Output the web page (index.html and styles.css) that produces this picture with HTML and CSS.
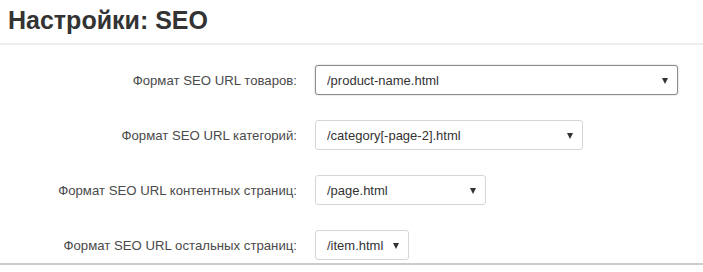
FILE: index.html
```html
<!DOCTYPE html>
<html lang="ru">
<head>
    <meta charset="UTF-8">
    <meta name="viewport" content="width=device-width, initial-scale=1.0">
    <title>Настройки: SEO</title>
    <link rel="stylesheet" href="styles.css">
</head>
<body>
    <div class="page-header">
        <h1>Настройки: SEO</h1>
    </div>
    <form class="settings">
        <div class="form-row">
            <label for="seo-products">Формат SEO URL товаров:</label>
            <span class="select-wrap is-active w-products">
                <select id="seo-products">
                    <option>/product-name.html</option>
                </select>
            </span>
        </div>
        <div class="form-row">
            <label for="seo-categories">Формат SEO URL категорий:</label>
            <span class="select-wrap w-categories">
                <select id="seo-categories">
                    <option>/category[-page-2].html</option>
                </select>
            </span>
        </div>
        <div class="form-row">
            <label for="seo-pages">Формат SEO URL контентных страниц:</label>
            <span class="select-wrap w-pages">
                <select id="seo-pages">
                    <option>/page.html</option>
                </select>
            </span>
        </div>
        <div class="form-row">
            <label for="seo-other">Формат SEO URL остальных страниц:</label>
            <span class="select-wrap w-other">
                <select id="seo-other">
                    <option>/item.html</option>
                </select>
            </span>
        </div>
    </form>
</body>
</html>
```

FILE: styles.css
```css
body {
    margin: 0;
    font-family: "Liberation Sans", Arial, sans-serif;
    background-color: #fff;
    color: #333;
}
.page-header {
    padding: 6px 8px 0;
    height: 37px;
    border-bottom: 2px solid #eee;
}
.page-header h1 {
    margin: 0;
    font-size: 25px;
    line-height: 29px;
    font-weight: bold;
    color: #333;
}
.settings {
    padding-top: 20px;
    border-bottom: 2px solid #ccc;
    padding-bottom: 3px;
}
.form-row {
    display: grid;
    grid-template-columns: 297px auto;
    column-gap: 18px;
    align-items: center;
    margin-bottom: 25px;
}
.form-row:last-child {
    margin-bottom: 0;
}
.form-row label {
    text-align: right;
    font-size: 13.2px;
    color: #4a4a4a;
}
.select-wrap {
    position: relative;
    display: block;
    height: 30px;
    box-sizing: border-box;
    border: 1px solid #d6d6d6;
    border-radius: 3px;
    background-color: #fff;
}
.select-wrap::after {
    content: "";
    position: absolute;
    right: 9px;
    top: 12px;
    border-left: 3px solid transparent;
    border-right: 3px solid transparent;
    border-top: 6px solid #333;
}
.select-wrap.is-active {
    border-color: #8c8c8c;
    box-shadow: 0 0 2px rgba(0, 0, 0, 0.25);
}
.select-wrap select {
    appearance: none;
    -webkit-appearance: none;
    width: 100%;
    height: 100%;
    border: none;
    background: transparent;
    padding: 0 24px 0 11px;
    font-family: "Liberation Sans", Arial, sans-serif;
    font-size: 13px;
    color: #333;
    outline: none;
}
.w-products { width: 363px; }
.w-categories { width: 268px; }
.w-pages { width: 171px; }
.w-other { width: 94px; }
```
